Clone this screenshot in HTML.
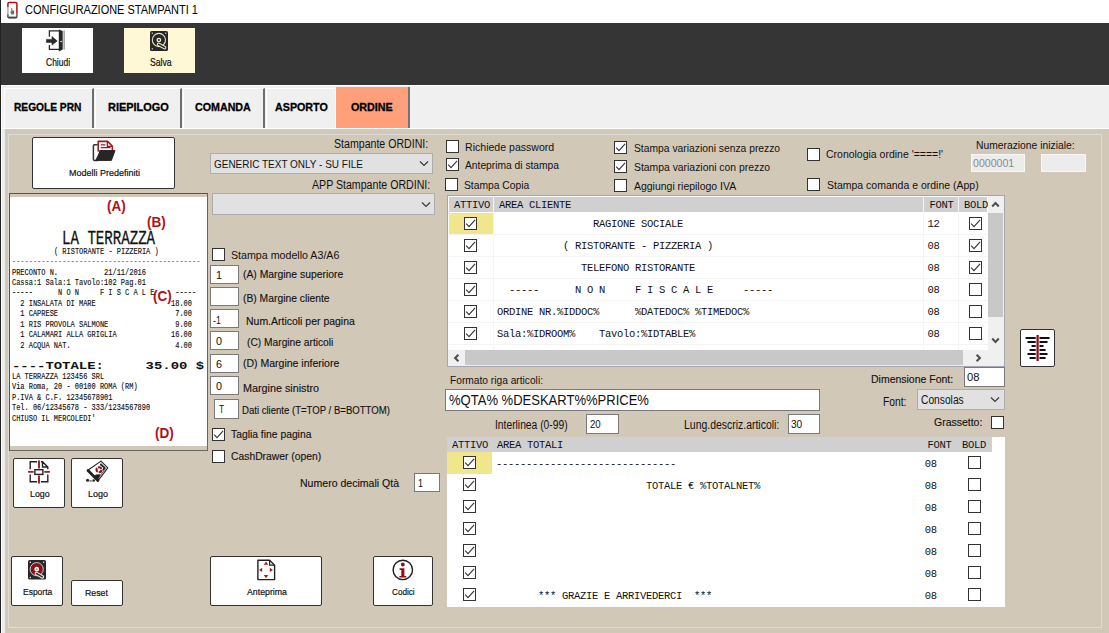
<!DOCTYPE html>
<html><head><meta charset="utf-8">
<style>
*{box-sizing:border-box;margin:0;padding:0}
html,body{width:1109px;height:633px;overflow:hidden;background:#d2c8b8;font-family:"Liberation Sans",sans-serif;color:#000}
.a{position:absolute}
.t{position:absolute;white-space:nowrap;line-height:1;transform-origin:0 0}
.cb{position:absolute;width:13px;height:13px;background:#fff;border:1px solid #333}
.cb svg{position:absolute;left:0;top:0}
.in{position:absolute;background:#fff;border:1px solid #7a7a7a}
.btn{position:absolute;background:#fff;border:1px solid #333;border-radius:2px}
.mono{font-family:"Liberation Mono",monospace}
.g{font-family:"Liberation Mono",monospace;font-size:10.5px;letter-spacing:-0.3px;color:#111;white-space:pre}
.tab{position:absolute;top:88px;height:40px;background:#f0f0f0;border-right:2px solid #6e6e6e;border-left:1px solid #fff;border-top:1px solid #fff}
.r{font-family:"Liberation Mono",monospace;font-size:9px;color:#111;-webkit-text-stroke:0.15px #111;white-space:pre;transform-origin:0 0;transform:scaleX(0.775);line-height:1;position:absolute}
.red{position:absolute;color:#b30f16;font-weight:bold;font-size:15.4px;line-height:1;white-space:nowrap;transform-origin:0 0;transform:scaleX(0.88)}
</style></head><body>
<div class="a" style="left:0px;top:0px;width:1109px;height:23px;background:#fff;"></div>
<svg class="a" style="left:6px;top:1px" width="13" height="19" viewBox="0 0 13 19"><path d="M1.9 6 V2.8 Q1.9 1.6 3.1 1.6 H9.7 Q10.9 1.6 10.9 2.8 V12" fill="none" stroke="#b01116" stroke-width="1.5"/><path d="M1.9 6 V14" stroke="#a8a8a8" stroke-width="1.4"/><path d="M1.9 13.5 V15.8 Q1.9 16.8 3.1 16.8 H9.7 Q10.9 16.8 10.9 15.8 V12" fill="none" stroke="#4a4a4a" stroke-width="1.4"/><path d="M2.4 16.4 H10.4" stroke="#444" stroke-width="1.6"/><path d="M5.3 7.3 L6.3 7 V9.2 L8.1 9.8 V12.4 L7.4 13.4 H5.6 L4.2 11 L4.8 10.4 L5.3 10.8 Z" fill="#6a6a6a"/></svg>
<div class="t" style="left:25.0px;top:3.5px;font-size:12.3px;color:#000;transform:scaleX(0.893);">CONFIGURAZIONE STAMPANTI 1</div>
<div class="a" style="left:0px;top:23px;width:1109px;height:62px;background:#353535;"></div>
<div class="a" style="left:22px;top:28px;width:71px;height:45px;background:#fff;"></div>
<div class="a" style="left:124px;top:28px;width:71px;height:45px;background:#fff8d6;"></div>
<div class="t" style="left:46.0px;top:58.1px;font-size:10.2px;color:#111;transform:scaleX(0.833);-webkit-text-stroke:0.2px #111;">Chiudi</div>
<div class="t" style="left:149.9px;top:58.1px;font-size:10.2px;color:#111;transform:scaleX(0.850);-webkit-text-stroke:0.2px #111;">Salva</div>
<svg class="a" style="left:44px;top:28px" width="24" height="26" viewBox="0 0 24 26"><path d="M5.4 8.8 V2.9 H15 M5.4 16.9 V21.4 H15" fill="none" stroke="#2a2a2a" stroke-width="1.3"/><path d="M20.1 2.5 V21.6" stroke="#666" stroke-width="0.9"/><path d="M14.8 1.4 L18.7 2.9 V21.6 L14.8 23.6 Z" fill="#262626"/><rect x="16.4" y="12.9" width="1.5" height="1.2" fill="#eee"/><path d="M2.4 11.4 H8 V8.6 L13.2 12.9 L8 17.1 V14.4 H2.4 Z" fill="#2a2a2a" stroke="#2a2a2a" stroke-width="0.6" stroke-linejoin="round"/></svg>
<svg class="a" style="left:150px;top:31px" width="18" height="20" viewBox="0 0 18 20"><rect x="0" y="0" width="18" height="20" rx="1.6" fill="#272727"/><circle cx="8.9" cy="9" r="6.6" fill="none" stroke="#e9e2c4" stroke-width="1.1"/><circle cx="8.9" cy="9" r="1.7" fill="none" stroke="#f3ecd0" stroke-width="1.3"/><path d="M8.6 13.4 L14.6 16.7" stroke="#e9e2c4" stroke-width="3.6" stroke-linecap="round"/><path d="M8.6 13.4 L14.6 16.7" stroke="#272727" stroke-width="1.5" stroke-linecap="round"/><circle cx="2.3" cy="2.3" r="0.75" fill="#d8d2b8"/><circle cx="15.7" cy="2.3" r="0.75" fill="#d8d2b8"/><circle cx="2.3" cy="17.7" r="0.75" fill="#d8d2b8"/></svg>
<div class="a" style="left:0px;top:85px;width:1109px;height:44px;background:#f0f0f0;"></div>
<div class="a" style="left:0px;top:85px;width:1109px;height:1px;background:#fff;"></div>
<div class="tab" style="left:4px;width:90px;"></div>
<div class="tab" style="left:95px;width:87px;"></div>
<div class="tab" style="left:183px;width:82px;"></div>
<div class="tab" style="left:266px;width:70px;border-right:1px solid #fff;"></div>
<div class="a" style="left:336px;width:74px;top:87px;height:41px;background:#ffa07a;border-right:2px solid #70757b"></div>
<div class="t" style="left:14.4px;top:102.4px;font-size:11.3px;font-weight:bold;color:#000;transform:scaleX(0.902);-webkit-text-stroke:0.3px #000;">REGOLE PRN</div>
<div class="t" style="left:107.7px;top:102.4px;font-size:11.3px;font-weight:bold;color:#000;transform:scaleX(0.968);-webkit-text-stroke:0.3px #000;">RIEPILOGO</div>
<div class="t" style="left:194.5px;top:102.4px;font-size:11.3px;font-weight:bold;color:#000;transform:scaleX(0.946);-webkit-text-stroke:0.3px #000;">COMANDA</div>
<div class="t" style="left:274.9px;top:102.4px;font-size:11.3px;font-weight:bold;color:#000;transform:scaleX(0.948);-webkit-text-stroke:0.3px #000;">ASPORTO</div>
<div class="t" style="left:350.9px;top:102.4px;font-size:11.3px;font-weight:bold;color:#000;transform:scaleX(0.949);-webkit-text-stroke:0.3px #000;">ORDINE</div>
<div class="a" style="left:0px;top:128px;width:1109px;height:1px;background:#fff;"></div>
<div class="a" style="left:0px;top:129px;width:1109px;height:504px;background:#d2c8b8;"></div>
<div class="a" style="left:0px;top:0px;width:1px;height:633px;background:#222;"></div>
<div class="a" style="left:1px;top:85px;width:1px;height:548px;background:#fff;"></div>
<div class="a" style="left:2px;top:129px;width:3px;height:504px;background:#ededee;"></div>
<div class="a" style="left:8px;top:134px;width:1094px;height:494px;border:1px solid #dedcd8"></div>
<div class="btn" style="left:32px;top:137px;width:143px;height:52px;"></div>
<div class="t" style="left:69.0px;top:167.6px;font-size:9.7px;color:#111;transform:scaleX(0.927);-webkit-text-stroke:0.2px #111;">Modelli Predefiniti</div>
<svg class="a" style="left:90px;top:139px" width="28" height="24" viewBox="0 0 28 24"><path d="M8 21.4 H4.6 Q3.4 21.4 3.4 20.2 V7 Q3.4 5.8 4.6 5.8 H7.6" fill="#fff" stroke="#333" stroke-width="1.5"/><path d="M8.2 12 V2.4 H17.6 L22.4 7.2 V12 Z" fill="#fff" stroke="#9c1c24" stroke-width="1.6" stroke-linejoin="round"/><path d="M17.4 2.4 V7.4 H22.4" fill="none" stroke="#9c1c24" stroke-width="1.4"/><path d="M10.8 5.8 H15.4 M10.8 8.6 H20.6" stroke="#9c1c24" stroke-width="1.3"/><path d="M10.4 11.6 H25 L21.4 21.4 H5.8 Z" fill="#262626" stroke="#262626" stroke-width="1" stroke-linejoin="round"/></svg>
<div class="t" style="left:334.3px;top:137.7px;font-size:12.3px;color:#111;transform:scaleX(0.862);">Stampante ORDINI:</div>
<div class="a" style="left:210px;top:153px;width:223px;height:21px;background:#e1e1e1;border:1px solid #adadad"></div>
<div class="t" style="left:214.0px;top:157.5px;font-size:11.6px;color:#111;transform:scaleX(0.860);">GENERIC TEXT ONLY - SU FILE</div>
<svg class="a" style="left:418.7px;top:160.2px" width="10" height="7" viewBox="0 0 10 7"><path d="M1 1.5 L5 5.5 L9 1.5" fill="none" stroke="#3a3a3a" stroke-width="1.2"/></svg>
<div class="t" style="left:312.2px;top:178.6px;font-size:12.3px;color:#111;transform:scaleX(0.862);">APP Stampante ORDINI:</div>
<div class="a" style="left:212px;top:193px;width:223px;height:22px;background:#e1e1e1;border:1px solid #adadad"></div>
<svg class="a" style="left:420.8px;top:201.1px" width="10" height="7" viewBox="0 0 10 7"><path d="M1 1.5 L5 5.5 L9 1.5" fill="none" stroke="#3a3a3a" stroke-width="1.2"/></svg>
<div class="a" style="left:9px;top:193px;width:199px;height:258px;background:#d2c8b8;border:1px solid #666;border-top-color:#555;border-left-color:#555"></div>
<div class="a" style="left:10px;top:197px;width:197px;height:249px;background:#fff;"></div>
<div class="red" style="left:106.5px;top:198.2px">(A)</div>
<div class="red" style="left:147.3px;top:214.1px">(B)</div>
<div class="red" style="left:153.3px;top:287.9px">(C)</div>
<div class="red" style="left:154.8px;top:424.6px">(D)</div>
<div class="a mono" style="left:62px;top:228.5px;font-size:20px;line-height:1;white-space:pre;color:#111;-webkit-text-stroke:0.3px #111;transform-origin:0 0;transform:scaleX(0.705)">LA TERRAZZA</div>
<div class="r" style="left:54px;top:247.5px;">( RISTORANTE - PIZZERIA )</div>
<div class="r" style="left:12px;top:258.0px;color:#555;-webkit-text-stroke:0">---------------------------------------------</div>
<div class="r" style="left:12px;top:268.5px;">PRECONTO N.           21/11/2016</div>
<div class="r" style="left:12px;top:278.5px;">Cassa:1 Sala:1 Tavolo:102 Pag.01</div>
<div class="r" style="left:12px;top:288.5px;">-----      N O N     F I S C A L E     -----</div>
<div class="r" style="left:12px;top:299.5px;">  2 INSALATA DI MARE                  18.00</div>
<div class="r" style="left:12px;top:309.5px;">  1 CAPRESE                            7.00</div>
<div class="r" style="left:12px;top:320.5px;">  1 RIS PROVOLA SALMONE                9.00</div>
<div class="r" style="left:12px;top:330.5px;">  1 CALAMARI ALLA GRIGLIA             16.00</div>
<div class="r" style="left:12px;top:341.5px;">  2 ACQUA NAT.                         4.00</div>
<div class="a mono" style="left:12px;top:360.5px;font-size:11px;font-weight:bold;line-height:1;white-space:pre;color:#111;transform-origin:0 0;transform:scaleX(1.265)">----TOTALE:     35.00 $</div>
<div class="r" style="left:12px;top:372.5px;">LA TERRAZZA 123456 SRL</div>
<div class="r" style="left:12px;top:382.5px;">Via Roma, 20 - 00100 ROMA (RM)</div>
<div class="r" style="left:12px;top:393.5px;">P.IVA &amp; C.F. 12345678901</div>
<div class="r" style="left:12px;top:403.5px;">Tel. 06/12345678 - 333/1234567890</div>
<div class="r" style="left:12px;top:414.5px;">CHIUSO IL MERCOLEDI'</div>
<div class="cb" style="left:212px;top:248px;"></div>
<div class="t" style="left:231.4px;top:249.2px;font-size:11.6px;color:#111;transform:scaleX(0.919);">Stampa modello A3/A6</div>
<div class="in" style="left:210px;top:265px;width:29px;height:19px;"></div>
<div class="t" style="left:216.0px;top:269.3px;font-size:11.6px;color:#111;transform:scaleX(0.930);">1</div>
<div class="t" style="left:243.3px;top:269.7px;font-size:10px;color:#111;transform:scaleX(1.036);-webkit-text-stroke:0.12px #111;">(A) Margine superiore</div>
<div class="in" style="left:210px;top:287px;width:29px;height:19px;"></div>
<div class="t" style="left:242.8px;top:293.9px;font-size:10px;color:#111;transform:scaleX(1.032);-webkit-text-stroke:0.12px #111;">(B) Margine cliente</div>
<div class="in" style="left:210px;top:309px;width:29px;height:19px;"></div>
<div class="t" style="left:213.2px;top:313.5px;font-size:11.6px;color:#111;transform:scaleX(0.756);">-1</div>
<div class="t" style="left:245.5px;top:316.7px;font-size:10px;color:#111;transform:scaleX(1.047);-webkit-text-stroke:0.12px #111;">Num.Articoli per pagina</div>
<div class="in" style="left:210px;top:331px;width:29px;height:19px;"></div>
<div class="t" style="left:216.0px;top:335.3px;font-size:11.6px;color:#111;transform:scaleX(0.930);">0</div>
<div class="t" style="left:246.8px;top:337.7px;font-size:10px;color:#111;transform:scaleX(1.022);-webkit-text-stroke:0.12px #111;">(C) Margine articoli</div>
<div class="in" style="left:210px;top:354px;width:29px;height:19px;"></div>
<div class="t" style="left:216.0px;top:358.3px;font-size:11.6px;color:#111;transform:scaleX(0.930);">6</div>
<div class="t" style="left:243.4px;top:359.1px;font-size:10px;color:#111;transform:scaleX(1.050);-webkit-text-stroke:0.12px #111;">(D) Margine inferiore</div>
<div class="in" style="left:210px;top:376px;width:29px;height:19px;"></div>
<div class="t" style="left:216.0px;top:380.3px;font-size:11.6px;color:#111;transform:scaleX(0.930);">0</div>
<div class="t" style="left:243.4px;top:383.6px;font-size:10px;color:#111;transform:scaleX(1.078);-webkit-text-stroke:0.12px #111;">Margine sinistro</div>
<div class="in" style="left:214px;top:399px;width:25px;height:20px;"></div>
<div class="t" style="left:218.5px;top:403.1px;font-size:11.6px;color:#111;transform:scaleX(0.720);">T</div>
<div class="t" style="left:242.4px;top:405.8px;font-size:10px;color:#111;transform:scaleX(0.957);-webkit-text-stroke:0.12px #111;">Dati cliente (T=TOP / B=BOTTOM)</div>
<div class="cb" style="left:212px;top:428px;"><svg width="11" height="11" viewBox="0 0 11 11"><path d="M1.2 5.7 L4 8.6 L10.1 1.9" fill="none" stroke="#333" stroke-width="1.1"/></svg></div>
<div class="t" style="left:231.0px;top:429.8px;font-size:10px;color:#111;transform:scaleX(1.033);-webkit-text-stroke:0.12px #111;">Taglia fine pagina</div>
<div class="cb" style="left:212px;top:450px;"></div>
<div class="t" style="left:231.0px;top:451.5px;font-size:10px;color:#111;transform:scaleX(1.034);-webkit-text-stroke:0.12px #111;">CashDrawer (open)</div>
<div class="t" style="left:299.7px;top:479.3px;font-size:10px;color:#111;transform:scaleX(1.055);-webkit-text-stroke:0.12px #111;">Numero decimali Qtà</div>
<div class="in" style="left:414px;top:473px;width:26px;height:19px;"></div>
<div class="t" style="left:418.0px;top:477.3px;font-size:11.6px;color:#111;transform:scaleX(0.775);">1</div>
<div class="btn" style="left:13px;top:458px;width:52px;height:50px;"></div>
<div class="btn" style="left:71px;top:458px;width:52px;height:50px;"></div>
<div class="t" style="left:30.2px;top:488.8px;font-size:9.7px;color:#111;transform:scaleX(0.913);-webkit-text-stroke:0.2px #111;">Logo</div>
<div class="t" style="left:88.2px;top:488.8px;font-size:9.7px;color:#111;transform:scaleX(0.927);-webkit-text-stroke:0.2px #111;">Logo</div>
<svg class="a" style="left:26px;top:458px" width="28" height="28" viewBox="0 0 28 28"><path d="M11 3.7 H4.2 V11.3 M4.2 16.6 V23.7 H11 M15 23.7 H21.8 V16.6 M21.8 11.3 V9 L16.5 3.7 H15 M16.5 3.7 V9 H21.8" fill="none" stroke="#222" stroke-width="1.4"/><path d="M13 2.6 V10.4 M13 17.6 V25.4 M2.1 13.9 H7.6 M18.3 13.9 H23.9" stroke="#9c1c24" stroke-width="1.9"/><rect x="8.9" y="11.7" width="8" height="4.7" fill="#fff" stroke="#222" stroke-width="1.4"/></svg>
<svg class="a" style="left:84px;top:458px" width="28" height="26" viewBox="0 0 28 26"><path d="M17 3.1 L23.8 9.9 L13.9 22.8 L3.8 12.2 Z" fill="#fff" stroke="#222" stroke-width="1.1" stroke-linejoin="round"/><path d="M16.8 5.4 L21.8 10.2 L14.6 19.6" fill="none" stroke="#333" stroke-width="0.8"/><path d="M4 12.4 L13.9 22.6" stroke="#222" stroke-width="2.8" stroke-linecap="round"/><path d="M12 16.6 L16.4 16.3 L13.9 22.8 L9.5 18.4 Z" fill="#222"/><path d="M16.2 6.2 L20.3 9.7 L19.2 12.4" fill="none" stroke="#222" stroke-width="1.7"/><circle cx="15" cy="11.7" r="2.5" fill="none" stroke="#8e0f17" stroke-width="2.1" stroke-dasharray="4.1 1.1"/><circle cx="3.6" cy="22.3" r="1.5" fill="#222"/><circle cx="6.2" cy="23" r="0.7" fill="#222"/><circle cx="9.7" cy="22.5" r="1.2" fill="#222"/><circle cx="7.9" cy="22.9" r="0.6" fill="#222"/></svg>
<div class="btn" style="left:11px;top:556px;width:52px;height:50px;"></div>
<div class="btn" style="left:71px;top:580px;width:52px;height:26px;"></div>
<div class="t" style="left:23.2px;top:587.2px;font-size:9.7px;color:#111;transform:scaleX(0.876);-webkit-text-stroke:0.2px #111;">Esporta</div>
<div class="t" style="left:85.3px;top:588.0px;font-size:9.7px;color:#111;transform:scaleX(0.904);-webkit-text-stroke:0.2px #111;">Reset</div>
<svg class="a" style="left:28px;top:560px" width="18" height="20" viewBox="0 0 18 20"><rect x="0" y="0" width="18" height="19.6" rx="1.6" fill="#272727"/><circle cx="8.7" cy="9.2" r="6.6" fill="#8b1016" stroke="#cfcfcf" stroke-width="1"/><circle cx="8.7" cy="9.2" r="1.7" fill="#999" stroke="#fff" stroke-width="1.3"/><path d="M8.4 13.5 L14.4 16.8" stroke="#eee" stroke-width="3.6" stroke-linecap="round"/><path d="M8.4 13.5 L14.4 16.8" stroke="#333" stroke-width="1.5" stroke-linecap="round"/><circle cx="2.3" cy="2.3" r="0.75" fill="#eee"/><circle cx="15.7" cy="2.3" r="0.75" fill="#eee"/><circle cx="2.3" cy="17.4" r="0.75" fill="#eee"/></svg>
<div class="btn" style="left:210px;top:556px;width:112px;height:50px;"></div>
<div class="t" style="left:247.2px;top:586.8px;font-size:9.7px;color:#111;transform:scaleX(0.905);-webkit-text-stroke:0.2px #111;">Anteprima</div>
<svg class="a" style="left:255px;top:557px" width="24" height="26" viewBox="0 0 24 26"><path d="M2.9 3.2 H14.6 L19.6 8.2 V22.6 H2.9 Z" fill="#fff" stroke="#222" stroke-width="1.4" stroke-linejoin="round"/><path d="M14.6 3.2 V8.2 H19.6" fill="none" stroke="#222" stroke-width="1.2"/><path d="M11 4.6 L13.2 7.8 H8.8 Z M11 21.2 L13.2 18 H8.8 Z M4 12.9 L7.2 10.7 V15.1 Z M18 12.9 L14.8 10.7 V15.1 Z" fill="#9c1c24"/></svg>
<div class="btn" style="left:373px;top:556px;width:60px;height:50px;"></div>
<div class="t" style="left:392.2px;top:586.8px;font-size:9.7px;color:#111;transform:scaleX(0.842);-webkit-text-stroke:0.2px #111;">Codici</div>
<svg class="a" style="left:391px;top:558px" width="24" height="24" viewBox="0 0 24 24"><circle cx="11.8" cy="11.9" r="9.7" fill="#fff" stroke="#222" stroke-width="1.4"/><circle cx="11.8" cy="6.5" r="1.9" fill="#8e0f17"/><path d="M8.6 10.3 H13.4 V18 H15.3 V19.6 H8.4 V18 H10.3 V11.9 H8.6 Z" fill="#8e0f17"/></svg>
<div class="cb" style="left:446px;top:140px;"></div>
<div class="t" style="left:465.0px;top:141.3px;font-size:11.6px;color:#111;transform:scaleX(0.911);">Richiede password</div>
<div class="cb" style="left:446px;top:158px;"><svg width="11" height="11" viewBox="0 0 11 11"><path d="M1.2 5.7 L4 8.6 L10.1 1.9" fill="none" stroke="#333" stroke-width="1.1"/></svg></div>
<div class="t" style="left:465.0px;top:159.1px;font-size:11.6px;color:#111;transform:scaleX(0.884);">Anteprima di stampa</div>
<div class="cb" style="left:445px;top:178px;"></div>
<div class="t" style="left:464.0px;top:179.1px;font-size:11.6px;color:#111;transform:scaleX(0.888);">Stampa Copia</div>
<div class="cb" style="left:614px;top:141px;"><svg width="11" height="11" viewBox="0 0 11 11"><path d="M1.2 5.7 L4 8.6 L10.1 1.9" fill="none" stroke="#333" stroke-width="1.1"/></svg></div>
<div class="t" style="left:633.8px;top:142.3px;font-size:11.6px;color:#111;transform:scaleX(0.889);">Stampa variazioni senza prezzo</div>
<div class="cb" style="left:614px;top:160px;"><svg width="11" height="11" viewBox="0 0 11 11"><path d="M1.2 5.7 L4 8.6 L10.1 1.9" fill="none" stroke="#333" stroke-width="1.1"/></svg></div>
<div class="t" style="left:633.8px;top:160.8px;font-size:11.6px;color:#111;transform:scaleX(0.895);">Stampa variazioni con prezzo</div>
<div class="cb" style="left:614px;top:179px;"></div>
<div class="t" style="left:633.8px;top:179.8px;font-size:11.6px;color:#111;transform:scaleX(0.902);">Aggiungi riepilogo IVA</div>
<div class="cb" style="left:807px;top:148px;"></div>
<div class="t" style="left:825.6px;top:147.9px;font-size:11.6px;color:#111;transform:scaleX(0.904);">Cronologia ordine '====!'</div>
<div class="cb" style="left:807px;top:178px;"></div>
<div class="t" style="left:826.5px;top:179.0px;font-size:11.6px;color:#111;transform:scaleX(0.905);">Stampa comanda e ordine (App)</div>
<div class="t" style="left:976.4px;top:139.3px;font-size:11.6px;color:#111;transform:scaleX(0.889);">Numerazione iniziale:</div>
<div class="a" style="left:971px;top:154px;width:54px;height:18px;background:#ececec;border:1px solid #f8f8f8"></div>
<div class="t" style="left:973.3px;top:157.3px;font-size:11.6px;color:#8a8a8a;transform:scaleX(0.912);">0000001</div>
<div class="a" style="left:1041px;top:154px;width:45px;height:18px;background:#ececec;border:1px solid #f8f8f8"></div>
<div class="a" style="left:447px;top:195px;width:558px;height:172px;background:#fff;border:1px solid #a3a6b0"></div>
<div class="a" style="left:449px;top:197px;width:538px;height:15px;background:#d0d0d0;"></div>
<div class="a" style="left:493px;top:197px;width:1px;height:15px;background:#f5f5f5;"></div>
<div class="a" style="left:923px;top:197px;width:1px;height:15px;background:#f5f5f5;"></div>
<div class="a" style="left:958px;top:197px;width:1px;height:15px;background:#f5f5f5;"></div>
<div class="t g" style="left:454px;top:200px;">ATTIVO</div>
<div class="t g" style="left:499px;top:200px;">AREA CLIENTE</div>
<div class="t g" style="left:929.5px;top:200px;">FONT</div>
<div class="a g" style="left:964px;top:200px;width:24px;overflow:hidden;line-height:1">BOLD</div>
<div class="a" style="left:449px;top:213px;width:44px;height:21px;background:#f0e68c;"></div>
<div class="a" style="left:449px;top:234px;width:539px;height:1px;background:#f4f4f4;"></div>
<div class="cb" style="left:464px;top:217px;"><svg width="11" height="11" viewBox="0 0 11 11"><path d="M1.2 5.7 L4 8.6 L10.1 1.9" fill="none" stroke="#333" stroke-width="1.1"/></svg></div>
<div class="t g" style="left:497px;top:219px;">                RAGIONE SOCIALE</div>
<div class="t g" style="left:927.5px;top:219px;">12</div>
<div class="cb" style="left:969px;top:217px;"><svg width="11" height="11" viewBox="0 0 11 11"><path d="M1.2 5.7 L4 8.6 L10.1 1.9" fill="none" stroke="#333" stroke-width="1.1"/></svg></div>
<div class="a" style="left:449px;top:256px;width:539px;height:1px;background:#f4f4f4;"></div>
<div class="cb" style="left:464px;top:239px;"><svg width="11" height="11" viewBox="0 0 11 11"><path d="M1.2 5.7 L4 8.6 L10.1 1.9" fill="none" stroke="#333" stroke-width="1.1"/></svg></div>
<div class="t g" style="left:497px;top:241px;">           ( RISTORANTE - PIZZERIA )</div>
<div class="t g" style="left:927.5px;top:241px;">08</div>
<div class="cb" style="left:969px;top:239px;"><svg width="11" height="11" viewBox="0 0 11 11"><path d="M1.2 5.7 L4 8.6 L10.1 1.9" fill="none" stroke="#333" stroke-width="1.1"/></svg></div>
<div class="a" style="left:449px;top:278px;width:539px;height:1px;background:#f4f4f4;"></div>
<div class="cb" style="left:464px;top:261px;"><svg width="11" height="11" viewBox="0 0 11 11"><path d="M1.2 5.7 L4 8.6 L10.1 1.9" fill="none" stroke="#333" stroke-width="1.1"/></svg></div>
<div class="t g" style="left:497px;top:263px;">              TELEFONO RISTORANTE</div>
<div class="t g" style="left:927.5px;top:263px;">08</div>
<div class="cb" style="left:969px;top:261px;"><svg width="11" height="11" viewBox="0 0 11 11"><path d="M1.2 5.7 L4 8.6 L10.1 1.9" fill="none" stroke="#333" stroke-width="1.1"/></svg></div>
<div class="a" style="left:449px;top:300px;width:539px;height:1px;background:#f4f4f4;"></div>
<div class="cb" style="left:464px;top:283px;"><svg width="11" height="11" viewBox="0 0 11 11"><path d="M1.2 5.7 L4 8.6 L10.1 1.9" fill="none" stroke="#333" stroke-width="1.1"/></svg></div>
<div class="t g" style="left:497px;top:285px;">  -----      N O N     F I S C A L E     -----</div>
<div class="t g" style="left:927.5px;top:285px;">08</div>
<div class="cb" style="left:969px;top:283px;"></div>
<div class="a" style="left:449px;top:322px;width:539px;height:1px;background:#f4f4f4;"></div>
<div class="cb" style="left:464px;top:305px;"><svg width="11" height="11" viewBox="0 0 11 11"><path d="M1.2 5.7 L4 8.6 L10.1 1.9" fill="none" stroke="#333" stroke-width="1.1"/></svg></div>
<div class="t g" style="left:497px;top:307px;">ORDINE NR.%IDDOC%      %DATEDOC% %TIMEDOC%</div>
<div class="t g" style="left:927.5px;top:307px;">08</div>
<div class="cb" style="left:969px;top:305px;"></div>
<div class="a" style="left:449px;top:344px;width:539px;height:1px;background:#f4f4f4;"></div>
<div class="cb" style="left:464px;top:327px;"><svg width="11" height="11" viewBox="0 0 11 11"><path d="M1.2 5.7 L4 8.6 L10.1 1.9" fill="none" stroke="#333" stroke-width="1.1"/></svg></div>
<div class="t g" style="left:497px;top:329px;">Sala:%IDROOM%    Tavolo:%IDTABLE%</div>
<div class="t g" style="left:927.5px;top:329px;">08</div>
<div class="cb" style="left:969px;top:327px;"></div>
<div class="a" style="left:493px;top:213px;width:1px;height:137px;background:#f4f4f4;"></div>
<div class="a" style="left:923px;top:213px;width:1px;height:137px;background:#f4f4f4;"></div>
<div class="a" style="left:958px;top:213px;width:1px;height:137px;background:#f4f4f4;"></div>
<div class="a" style="left:988px;top:196px;width:16px;height:154px;background:#f0f0f0;"></div>
<div class="a" style="left:988px;top:213px;width:15px;height:104px;background:#c8c8c8;"></div>
<svg class="a" style="left:991px;top:201px" width="9" height="7" viewBox="0 0 9 7"><path d="M1.2 5.4 L4.5 2.1 L7.8 5.4" fill="none" stroke="#505050" stroke-width="2.1"/></svg>
<svg class="a" style="left:991px;top:337px" width="9" height="7" viewBox="0 0 9 7"><path d="M1.2 1.6 L4.5 4.9 L7.8 1.6" fill="none" stroke="#505050" stroke-width="2.1"/></svg>
<div class="a" style="left:448px;top:350px;width:556px;height:16px;background:#f0f0f0;"></div>
<div class="a" style="left:465px;top:350px;width:498px;height:15px;background:#c8c8c8;"></div>
<svg class="a" style="left:452.5px;top:352.5px" width="7" height="10" viewBox="0 0 7 10"><path d="M5.4 1.7 L2.1 5 L5.4 8.3" fill="none" stroke="#505050" stroke-width="2.1"/></svg>
<svg class="a" style="left:974.5px;top:352.5px" width="7" height="10" viewBox="0 0 7 10"><path d="M1.6 1.7 L4.9 5 L1.6 8.3" fill="none" stroke="#505050" stroke-width="2.1"/></svg>
<div class="btn" style="left:1020px;top:329px;width:35px;height:38px;"></div>
<svg class="a" style="left:1020px;top:329px" width="35" height="38" viewBox="0 0 35 38"><path d="M6.3 9 H15.0 M20.2 9 H28.8 M8.2 13 H15.0 M20.2 13 H26.8 M12.3 17 H15.0 M20.2 17 H22.8 M10.3 21 H15.0 M20.2 21 H24.9 M8.2 25 H15.0 M20.2 25 H26.8 M10.3 29 H15.0 M20.2 29 H24.9 " stroke="#111" stroke-width="1.9" stroke-linecap="round" fill="none"/><path d="M17.6 6 V32" stroke="#960e1a" stroke-width="2.3"/></svg>
<div class="t" style="left:450.3px;top:374.1px;font-size:11.6px;color:#111;transform:scaleX(0.880);">Formato riga articoli:</div>
<div class="in" style="left:445px;top:389px;width:375px;height:22px;"></div>
<div class="t" style="left:448.6px;top:393.3px;font-size:14px;color:#111;transform:scaleX(0.930);">%QTA% %DESKART%%PRICE%</div>
<div class="t" style="left:494.5px;top:418.7px;font-size:12px;color:#111;transform:scaleX(0.857);">Interlinea (0-99)</div>
<div class="in" style="left:586px;top:414px;width:33px;height:20px;"></div>
<div class="t" style="left:589.6px;top:418.3px;font-size:11.6px;color:#111;transform:scaleX(0.829);">20</div>
<div class="t" style="left:684.3px;top:418.9px;font-size:12px;color:#111;transform:scaleX(0.871);">Lung.descriz.articoli:</div>
<div class="in" style="left:788px;top:414px;width:32px;height:20px;"></div>
<div class="t" style="left:791.3px;top:418.3px;font-size:11.6px;color:#111;transform:scaleX(0.868);">30</div>
<div class="t" style="left:871.4px;top:374.7px;font-size:10px;color:#111;transform:scaleX(1.048);-webkit-text-stroke:0.12px #111;">Dimensione Font:</div>
<div class="in" style="left:964px;top:367px;width:41px;height:20px;"></div>
<div class="t" style="left:967.2px;top:371.3px;font-size:11.6px;color:#111;transform:scaleX(0.961);">08</div>
<div class="t" style="left:883.3px;top:396.2px;font-size:12.3px;color:#111;transform:scaleX(0.838);">Font:</div>
<div class="a" style="left:917px;top:389px;width:88px;height:21px;background:#e1e1e1;border:1px solid #adadad"></div>
<div class="t" style="left:920.6px;top:393.7px;font-size:12px;color:#111;transform:scaleX(0.854);">Consolas</div>
<svg class="a" style="left:990px;top:396px" width="10" height="7" viewBox="0 0 10 7"><path d="M1 1.5 L5 5.5 L9 1.5" fill="none" stroke="#3a3a3a" stroke-width="1.2"/></svg>
<div class="t" style="left:934.3px;top:417.7px;font-size:10px;color:#111;transform:scaleX(1.047);-webkit-text-stroke:0.12px #111;">Grassetto:</div>
<div class="cb" style="left:991px;top:416px;"></div>
<div class="a" style="left:447px;top:437px;width:558px;height:170px;background:#fff;"></div>
<div class="a" style="left:447px;top:437px;width:545px;height:15px;background:#d0d0d0;"></div>
<div class="t g" style="left:452px;top:440px;">ATTIVO</div>
<div class="t g" style="left:497px;top:440px;">AREA TOTALI</div>
<div class="t g" style="left:927.4px;top:440px;">FONT</div>
<div class="t g" style="left:962px;top:440px;">BOLD</div>
<div class="a" style="left:447px;top:452px;width:45px;height:22px;background:#f0e68c;"></div>
<div class="cb" style="left:463px;top:456px;"><svg width="11" height="11" viewBox="0 0 11 11"><path d="M1.2 5.7 L4 8.6 L10.1 1.9" fill="none" stroke="#333" stroke-width="1.1"/></svg></div>
<div class="t g" style="left:496px;top:459px;">------------------------------</div>
<div class="t g" style="left:924.8px;top:459px;">08</div>
<div class="cb" style="left:968px;top:456px;"></div>
<div class="cb" style="left:463px;top:478px;"><svg width="11" height="11" viewBox="0 0 11 11"><path d="M1.2 5.7 L4 8.6 L10.1 1.9" fill="none" stroke="#333" stroke-width="1.1"/></svg></div>
<div class="t g" style="left:496px;top:481px;">                         TOTALE € %TOTALNET%</div>
<div class="t g" style="left:924.8px;top:481px;">08</div>
<div class="cb" style="left:968px;top:478px;"></div>
<div class="cb" style="left:463px;top:500px;"><svg width="11" height="11" viewBox="0 0 11 11"><path d="M1.2 5.7 L4 8.6 L10.1 1.9" fill="none" stroke="#333" stroke-width="1.1"/></svg></div>
<div class="t g" style="left:924.8px;top:503px;">08</div>
<div class="cb" style="left:968px;top:500px;"></div>
<div class="cb" style="left:463px;top:522px;"><svg width="11" height="11" viewBox="0 0 11 11"><path d="M1.2 5.7 L4 8.6 L10.1 1.9" fill="none" stroke="#333" stroke-width="1.1"/></svg></div>
<div class="t g" style="left:924.8px;top:525px;">08</div>
<div class="cb" style="left:968px;top:522px;"></div>
<div class="cb" style="left:463px;top:544px;"><svg width="11" height="11" viewBox="0 0 11 11"><path d="M1.2 5.7 L4 8.6 L10.1 1.9" fill="none" stroke="#333" stroke-width="1.1"/></svg></div>
<div class="t g" style="left:924.8px;top:547px;">08</div>
<div class="cb" style="left:968px;top:544px;"></div>
<div class="cb" style="left:463px;top:566px;"><svg width="11" height="11" viewBox="0 0 11 11"><path d="M1.2 5.7 L4 8.6 L10.1 1.9" fill="none" stroke="#333" stroke-width="1.1"/></svg></div>
<div class="t g" style="left:924.8px;top:569px;">08</div>
<div class="cb" style="left:968px;top:566px;"></div>
<div class="cb" style="left:463px;top:588px;"><svg width="11" height="11" viewBox="0 0 11 11"><path d="M1.2 5.7 L4 8.6 L10.1 1.9" fill="none" stroke="#333" stroke-width="1.1"/></svg></div>
<div class="t g" style="left:496px;top:591px;">       *** GRAZIE E ARRIVEDERCI  ***</div>
<div class="t g" style="left:924.8px;top:591px;">08</div>
<div class="cb" style="left:968px;top:588px;"></div>
</body></html>
